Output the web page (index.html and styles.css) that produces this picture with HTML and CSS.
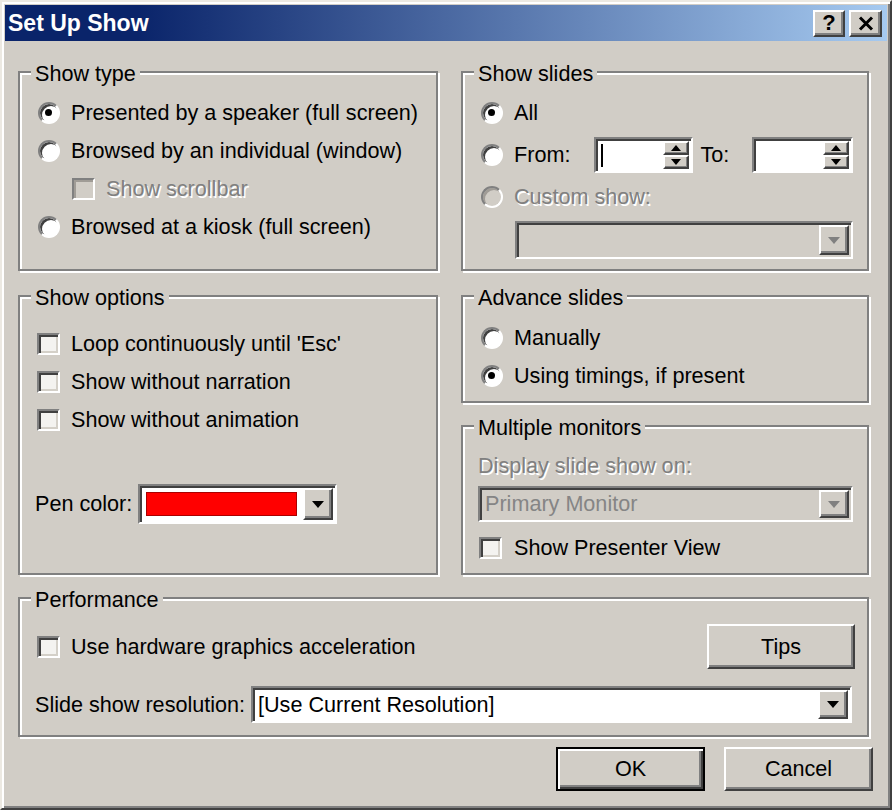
FILE: index.html
```html
<!DOCTYPE html>
<html lang="en">
<head>
    <meta charset="UTF-8">
    <title>Set Up Show</title>
    <link rel="stylesheet" href="styles.css">
</head>
<body>
    <div class="window">
        <div class="titlebar">
            <span class="title">Set Up Show</span>
            <div class="caption-buttons">
                <button class="cap-btn help">?</button>
                <button class="cap-btn close">
                    <svg width="18" height="15" viewBox="0 0 18 15"><path d="M3 1.5 L15 13.5 M15 1.5 L3 13.5" stroke="#000" stroke-width="3"/></svg>
                </button>
            </div>
        </div>

        <div class="content">
            <div class="columns">
                <div class="col col-left">
                    <div class="group show-type">
                        <span class="legend">Show type</span>
                        <div class="opt"><span class="radio checked"></span>Presented by a speaker (full screen)</div>
                        <div class="opt"><span class="radio"></span>Browsed by an individual (window)</div>
                        <div class="opt sub disabled"><span class="check"></span>Show scrollbar</div>
                        <div class="opt"><span class="radio"></span>Browsed at a kiosk (full screen)</div>
                    </div>

                    <div class="group show-options">
                        <span class="legend">Show options</span>
                        <div class="opt"><span class="check"></span>Loop continuously until 'Esc'</div>
                        <div class="opt"><span class="check"></span>Show without narration</div>
                        <div class="opt"><span class="check"></span>Show without animation</div>
                        <div class="pen-row">
                            <span class="pen-label">Pen color:</span>
                            <div class="combo pen-combo">
                                <span class="swatch"></span>
                                <span class="drop-btn">
                                    <svg width="12" height="7" viewBox="0 0 12 7"><path d="M0 0H12L6 7Z" fill="#000"/></svg>
                                </span>
                            </div>
                        </div>
                    </div>
                </div>

                <div class="col col-right">
                    <div class="group show-slides">
                        <span class="legend">Show slides</span>
                        <div class="opt"><span class="radio checked"></span>All</div>
                        <div class="opt from-row">
                            <span class="radio"></span>
                            <span class="from-label">From:</span>
                            <div class="spin">
                                <span class="caret"></span>
                                <span class="spin-btns">
                                    <span class="spin-btn"><svg width="10" height="6" viewBox="0 0 10 6"><path d="M0 6H10L5 0Z" fill="#000"/></svg></span>
                                    <span class="spin-btn"><svg width="10" height="6" viewBox="0 0 10 6"><path d="M0 0H10L5 6Z" fill="#000"/></svg></span>
                                </span>
                            </div>
                            <span class="to-label">To:</span>
                            <div class="spin spin-to">
                                <span class="spin-btns">
                                    <span class="spin-btn"><svg width="10" height="6" viewBox="0 0 10 6"><path d="M0 6H10L5 0Z" fill="#000"/></svg></span>
                                    <span class="spin-btn"><svg width="10" height="6" viewBox="0 0 10 6"><path d="M0 0H10L5 6Z" fill="#000"/></svg></span>
                                </span>
                            </div>
                        </div>
                        <div class="opt disabled"><span class="radio"></span>Custom show:</div>
                        <div class="combo combo-disabled custom-combo">
                            <span class="drop-btn">
                                <svg width="12" height="7" viewBox="0 0 12 7"><path d="M0 0H12L6 7Z" fill="#808080"/></svg>
                            </span>
                        </div>
                    </div>

                    <div class="group advance">
                        <span class="legend">Advance slides</span>
                        <div class="opt"><span class="radio"></span>Manually</div>
                        <div class="opt"><span class="radio checked"></span>Using timings, if present</div>
                    </div>

                    <div class="group monitors">
                        <span class="legend">Multiple monitors</span>
                        <div class="field-label disabled">Display slide show on:</div>
                        <div class="combo combo-disabled monitor-combo">
                            <span class="combo-text">Primary Monitor</span>
                            <span class="drop-btn">
                                <svg width="12" height="7" viewBox="0 0 12 7"><path d="M0 0H12L6 7Z" fill="#808080"/></svg>
                            </span>
                        </div>
                        <div class="opt presenter"><span class="check"></span>Show Presenter View</div>
                    </div>
                </div>
            </div>

            <div class="group performance">
                <span class="legend">Performance</span>
                <div class="perf-row">
                    <div class="opt"><span class="check"></span>Use hardware graphics acceleration</div>
                    <button class="btn tips">Tips</button>
                </div>
                <div class="perf-row res-row">
                    <span class="res-label">Slide show resolution:</span>
                    <div class="combo res-combo">
                        <span class="combo-text">[Use Current Resolution]</span>
                        <span class="drop-btn">
                            <svg width="12" height="7" viewBox="0 0 12 7"><path d="M0 0H12L6 7Z" fill="#000"/></svg>
                        </span>
                    </div>
                </div>
            </div>

            <div class="footer">
                <button class="btn default">OK</button>
                <button class="btn">Cancel</button>
            </div>
        </div>
    </div>
</body>
</html>
```

FILE: styles.css
```css
body {
    margin: 0;
    background: #d1cdc6;
    font-family: "Liberation Sans", Arial, sans-serif;
    font-size: 21.6px;
    line-height: 22px;
    color: #000;
}

.window {
    width: 892px;
    height: 810px;
    box-sizing: border-box;
    border: 2px solid;
    border-color: #ece9e2 #404040 #404040 #ece9e2;
    box-shadow: inset 2px 2px 0 #fff, inset -2px -2px 0 #808080;
    padding: 3px;
    background: #d1cdc6;
    display: flex;
    flex-direction: column;
}

/* title bar */
.titlebar {
    height: 36px;
    flex-shrink: 0;
    display: flex;
    align-items: center;
    justify-content: space-between;
    padding: 0 5px 0 3px;
    background: linear-gradient(to right, #0a246a 15%, #a6caf0);
}

.title {
    color: #fff;
    font-weight: bold;
    font-size: 23px;
}

.caption-buttons {
    display: flex;
    gap: 4px;
}

.cap-btn {
    width: 32px;
    height: 27px;
    box-sizing: border-box;
    padding: 0;
    border: 2px solid;
    border-color: #fff #404040 #404040 #fff;
    box-shadow: inset -2px -2px 0 #808080;
    background: #d1cdc6;
    font-family: "Liberation Sans", Arial, sans-serif;
    font-weight: bold;
    font-size: 22px;
    line-height: 20px;
    display: flex;
    align-items: center;
    justify-content: center;
}

.cap-btn.close {
    width: 33px;
}

/* content */
.content {
    flex: 1;
    padding: 30px 18px 0 13px;
}

.columns {
    display: flex;
    gap: 23px;
}

.col {
    display: flex;
    flex-direction: column;
}

.col-left {
    width: 420px;
}

.col-right {
    width: 408px;
}

.group {
    position: relative;
    box-sizing: border-box;
    border: 2px solid #808080;
    box-shadow: inset 2px 2px 0 #fff, 2px 2px 0 #fff;
    padding: 0 14px 0 15px;
}

.legend {
    position: absolute;
    top: -10px;
    left: 11px;
    padding: 0 4px;
    background: #d1cdc6;
}

.show-type {
    height: 200px;
    padding-top: 21px;
}

.show-options {
    height: 280px;
    margin-top: 24px;
    padding-top: 28px;
}

.show-slides {
    height: 200px;
    padding-top: 21px;
}

.advance {
    height: 108px;
    margin-top: 24px;
    padding-top: 22px;
}

.monitors {
    height: 150px;
    margin-top: 22px;
    padding-top: 20px;
}

.performance {
    height: 140px;
    margin-top: 22px;
    padding: 25px 15px 0 15px;
}

/* options */
.opt {
    display: flex;
    align-items: center;
    height: 38px;
    white-space: nowrap;
}

.opt.sub {
    padding-left: 35px;
}

.disabled {
    color: #808080;
    text-shadow: 1.5px 1.5px 0 #fff;
}

.radio {
    position: relative;
    width: 22px;
    height: 22px;
    box-sizing: border-box;
    flex-shrink: 0;
    margin: 0 11px 0 3px;
    border-radius: 50%;
    border: 2px solid;
    border-color: #808080 #fff #fff #808080;
    box-shadow: inset 2px 2px 0 #404040;
    background: #fff;
}

.radio.checked::after {
    content: "";
    position: absolute;
    top: 5px;
    left: 5px;
    width: 7px;
    height: 7px;
    border-radius: 50%;
    background: #000;
}

.disabled .radio {
    background: #d1cdc6;
    box-shadow: inset 2px 2px 0 #a09c96;
}

.check {
    width: 23px;
    height: 22px;
    box-sizing: border-box;
    flex-shrink: 0;
    margin: 0 11px 0 2px;
    border: 2px solid;
    border-color: #808080 #fff #fff #808080;
    box-shadow: inset 2px 2px 0 #404040, inset -2px -2px 0 #d4d0c8;
    background: #f4f3f0;
}

.disabled .check {
    background: #d1cdc6;
    box-shadow: inset 2px 2px 0 #a09c96;
}

/* pen color */
.pen-row {
    display: flex;
    align-items: center;
    margin-top: 45px;
}

.pen-label {
    width: 103px;
}

/* combo boxes */
.combo {
    box-sizing: border-box;
    display: flex;
    align-items: center;
    border: 2px solid;
    border-color: #808080 #fff #fff #808080;
    box-shadow: inset 2px 2px 0 #404040;
    background: #fff;
    padding: 2px;
}

.combo-disabled {
    background: #d1cdc6;
}

.combo-text {
    padding-left: 3px;
    white-space: nowrap;
}

.combo-disabled .combo-text {
    color: #858585;
}

.drop-btn {
    margin-left: auto;
    width: 30px;
    align-self: stretch;
    box-sizing: border-box;
    border: 2px solid;
    border-color: #fff #404040 #404040 #fff;
    box-shadow: inset -2px -2px 0 #808080;
    background: #d1cdc6;
    display: flex;
    align-items: center;
    justify-content: center;
}

.pen-combo {
    width: 199px;
    height: 40px;
}

.swatch {
    width: 151px;
    height: 24px;
    margin-left: 4px;
    box-sizing: border-box;
    border: 1px solid #a00;
    background: #f00;
}

.custom-combo {
    width: 338px;
    height: 38px;
    margin: 5px 0 0 37px;
}

.monitor-combo {
    width: 375px;
    height: 36px;
    margin-top: 1px;
}

.presenter {
    margin-top: 7px;
}

.presenter .check {
    margin: 0 12px 0 1px;
}

.field-label {
    height: 38px;
    display: flex;
    align-items: center;
}

/* from/to spinners */
.from-label {
    width: 80px;
}

.to-label {
    width: 52px;
    margin-left: 7px;
}

.from-row {
    height: 46px;
}

.spin {
    box-sizing: border-box;
    width: 100px;
    height: 36px;
    display: flex;
    align-items: center;
    border: 2px solid;
    border-color: #808080 #fff #fff #808080;
    box-shadow: inset 2px 2px 0 #404040;
    background: #fff;
    padding: 2px;
}

.spin-to {
    width: 101px;
}

.caret {
    width: 2px;
    height: 23px;
    margin-left: 3px;
    background: #000;
}

.spin-btns {
    margin-left: auto;
    width: 26px;
    align-self: stretch;
    display: flex;
    flex-direction: column;
}

.spin-btn {
    flex: 1;
    box-sizing: border-box;
    border: 2px solid;
    border-color: #fff #404040 #404040 #fff;
    box-shadow: inset -1px -1px 0 #808080;
    background: #d1cdc6;
    display: flex;
    align-items: center;
    justify-content: center;
}

/* performance */
.perf-row {
    display: flex;
    align-items: center;
    justify-content: space-between;
}

.perf-row .opt {
    height: 45px;
}

.res-row {
    margin-top: 17px;
}

.res-label {
    white-space: nowrap;
}

.res-combo {
    width: 601px;
    height: 37px;
}

/* buttons */
.btn {
    box-sizing: border-box;
    width: 149px;
    height: 44px;
    padding: 0;
    border: 2px solid;
    border-color: #fff #404040 #404040 #fff;
    box-shadow: inset -2px -2px 0 #808080;
    background: #d1cdc6;
    font-family: "Liberation Sans", Arial, sans-serif;
    font-size: 21.6px;
    color: #000;
}

.btn.tips {
    width: 148px;
    height: 45px;
    margin-right: -3px;
}

.btn.default {
    border-color: #000;
    box-shadow: inset 2px 2px 0 #fff, inset -2px -2px 0 #404040, inset -4px -4px 0 #808080;
}

.footer {
    display: flex;
    justify-content: flex-end;
    gap: 19px;
    margin: 10px -4px 0 0;
}
```
